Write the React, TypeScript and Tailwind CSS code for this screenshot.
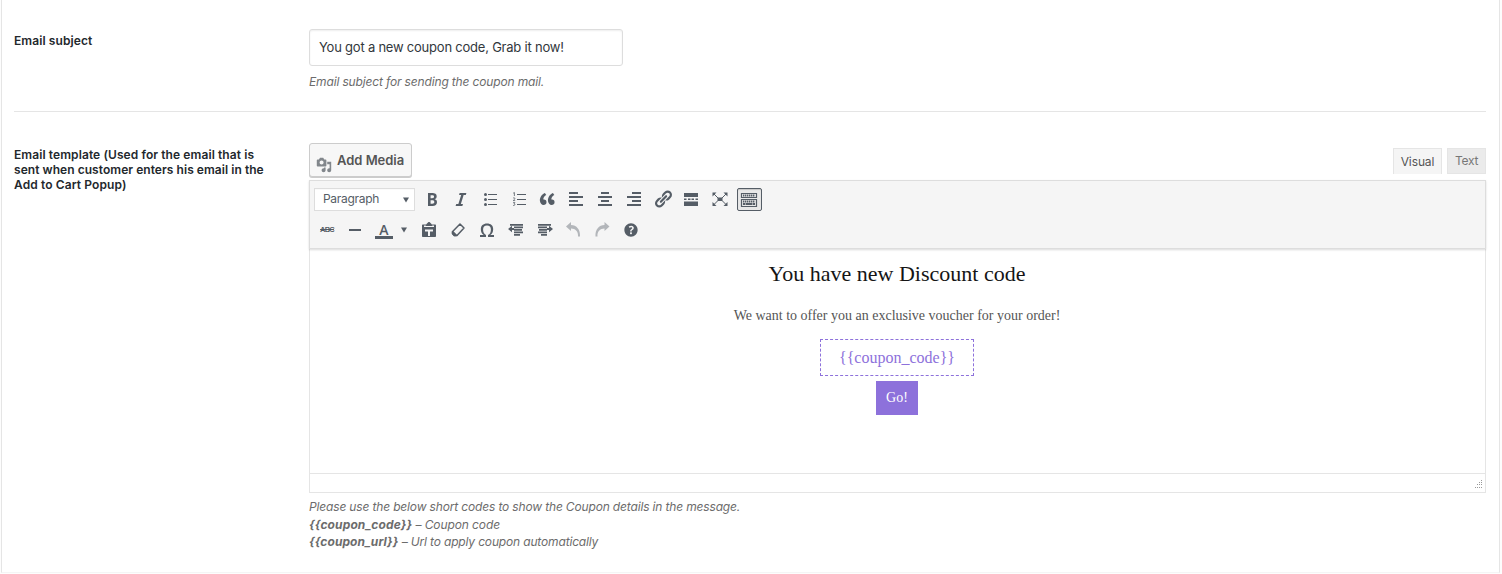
import React from "react";

const Icon = ({ children, faded = false }: { children: React.ReactNode; faded?: boolean }) => (
  <span className="flex h-[30px] w-[28.8px] shrink-0 items-center justify-center">
    <svg viewBox="0 0 20 20" className={faded ? "size-5 fill-[#b3b6ba]" : "size-5 fill-[#555d66]"}>
      {children}
    </svg>
  </span>
);

const Caret = () => (
  <svg viewBox="0 0 6 6" className="size-1.5 fill-[#555d66]">
    <path d="M0 0.5h6L3 5.5z" />
  </svg>
);

const Bars = ({ rows }: { rows: [number, number][] }) => (
  <Icon>
    {rows.map(([x, w], i) => (
      <rect key={i} x={x} y={3 + i * 4} width={w} height={2} />
    ))}
  </Icon>
);

const FirstRow = () => (
  <div className="flex h-[31px] items-start">
    <div className="mt-1 mr-[2.8px] flex h-[23px] w-[101px] items-center justify-between border border-[#ddd] bg-white pr-[5px] pl-2 text-[12px] text-[#555d66] shadow-[inset_0_1px_1px_-1px_rgba(0,0,0,.2)]">
      <span className="-mt-0.5 tracking-[-0.3px]">Paragraph</span>
      <Caret />
    </div>
    <Icon>
      <path d="M6 4v13h4.54c1.37 0 2.46-.33 3.26-1 .8-.66 1.2-1.58 1.2-2.77 0-.84-.17-1.51-.51-2.01s-.9-.85-1.67-1.03v-.09c.57-.1 1.02-.4 1.36-.9s.51-1.13.51-1.91c0-1.14-.39-1.98-1.17-2.5C12.75 4.26 11.5 4 9.78 4H6zm2.57 5.15V6.26h1.36c.73 0 1.27.11 1.61.32.34.22.51.58.51 1.07 0 .54-.16.92-.47 1.15s-.82.35-1.51.35h-1.5zm0 2.19h1.6c1.44 0 2.16.53 2.16 1.61 0 .6-.17 1.05-.51 1.34s-.86.43-1.57.43H8.57v-3.38z" />
    </Icon>
    <Icon>
      <path d="M14.78 6h-2.13l-2.8 9h2.12l-.62 2H4.6l.62-2h2.14l2.8-9H8.03l.62-2h6.75z" />
    </Icon>
    <Icon>
      <circle cx="5.5" cy="5.5" r="1.5" />
      <circle cx="5.5" cy="10.5" r="1.5" />
      <circle cx="5.5" cy="15.5" r="1.5" />
      <path d="M8 5h9v1H8zM8 10h9v1H8zM8 15h9v1H8z" />
    </Icon>
    <Icon>
      <path d="M8 5h9v1H8zM8 10h9v1H8zM8 15h9v1H8z" />
      <path
        d="M4.2 4.2 5.4 3.5V7M4 9.2c1-.8 2.3-.2 1.8.8L4.2 11.6h2M4.1 13.6h1.8L5 14.9c1.4 0 1.2 2-.9 1.5"
        fill="none"
        stroke="#555d66"
        strokeWidth=".8"
      />
    </Icon>
    <Icon>
      <path d="M9.49 13.22c0-.74-.2-1.38-.61-1.9-.62-.78-1.83-.88-2.53-.72-.29-1.65 1.11-3.75 2.92-4.65L7.88 4c-2.73 1.3-5.42 4.28-4.96 8.05C3.21 14.43 4.59 16 6.54 16c.85 0 1.56-.25 2.12-.75s.83-1.18.83-2.03zm8.05 0c0-.74-.2-1.38-.61-1.9-.63-.78-1.83-.88-2.53-.72-.29-1.65 1.11-3.75 2.92-4.65L15.93 4c-2.73 1.3-5.41 4.28-4.95 8.05.29 2.38 1.66 3.95 3.61 3.95.85 0 1.56-.25 2.12-.75s.83-1.18.83-2.03z" />
    </Icon>
    <Bars rows={[[3, 9], [3, 14], [3, 9], [3, 14]]} />
    <Bars rows={[[6, 8], [3, 14], [6, 8], [3, 14]]} />
    <Bars rows={[[8, 9], [3, 14], [8, 9], [3, 14]]} />
    <Icon>
      <path d="M17.74 2.76c1.68 1.69 1.68 4.41 0 6.1l-1.53 1.52c-1.12 1.12-2.7 1.47-4.14 1.09l2.62-2.61.76-.77.76-.76c.84-.84.84-2.2 0-3.04-.84-.85-2.2-.85-3.04 0l-.77.76-3.38 3.38c-.37-1.44-.02-3.02 1.1-4.14l1.52-1.53c1.69-1.68 4.42-1.68 6.1 0zM8.59 13.43l5.34-5.34c.42-.42.42-1.1 0-1.52-.44-.43-1.13-.39-1.53 0l-5.33 5.34c-.42.42-.42 1.1 0 1.52.44.43 1.13.39 1.52 0zm-.76 2.29l4.14-4.15c.38 1.44.03 3.02-1.09 4.14l-1.52 1.53c-1.69 1.68-4.41 1.68-6.1 0-1.68-1.68-1.68-4.42 0-6.1l1.53-1.52c1.12-1.12 2.7-1.47 4.14-1.1l-4.14 4.15c-.85.84-.85 2.2 0 3.05.84.84 2.2.84 3.04 0z" />
    </Icon>
    <Icon>
      <path d="M3 4h14v4H3zM3 9.5h2.5V11H3zM7 9.5h2.5V11H7zM10.5 9.5H13V11h-2.5zM14.5 9.5H17V11h-2.5zM3 12.5h14V17H3z" />
    </Icon>
    <Icon>
      <path d="M7.5 8.5h5V12h-5zM2.500 3.500H6.500l-4 4zM17.500 3.500v4l-4-4zM2.500 17v-4l4 4zM17.500 17h-4l4-4z" />
      <path d="m4 5 4 4M16 5l-4 4M4 15.500l4-4M16 15.500l-4-4" stroke="#555d66" strokeWidth="1" />
    </Icon>
    <span className="mt-1 ml-[2.2px] flex h-[23px] w-[25px] items-center justify-center rounded-[2px] border border-[#555d66] bg-[#e8e8e8] shadow-[inset_0_1px_1px_rgba(0,0,0,.15)]">
      <svg viewBox="0 0 20 20" className="size-5 shrink-0 fill-none stroke-[#555d66]">
        <path d="M2.5 3.5h15v4h-15zM2.5 9.5h15v7h-15z" strokeWidth="1.2" />
        <path d="M4 5.5h12" strokeWidth="2" strokeDasharray="1.4 .6" />
        <path d="M4 11.5h12" strokeWidth="2" strokeDasharray="1.4 .6" />
        <path d="M4 14h2.5M7 14h6M13.5 14H16" strokeWidth="2" />
      </svg>
    </span>
  </div>
);

const SecondRow = () => (
  <div className="flex h-[31px] items-start">
    <span className="flex h-[30px] w-[26px] items-center justify-center font-['Liberation_Sans'] text-[7.5px] font-bold tracking-[-0.8px] text-[#555d66] line-through">
      ABC
    </span>
    <span className="w-px" />
    <Icon>
      <path d="M4 9h12v2H4z" />
    </Icon>
    <span className="flex w-[28px] justify-center pt-2">
      <span className="flex h-4 w-[18px] items-end justify-center border-b-[3px] border-[#555d66] font-['Open_Sans'] text-[14px] leading-[13px] font-semibold text-[#555d66]">
        A
      </span>
    </span>
    <span className="flex h-[30px] w-[12px] items-center justify-center">
      <Caret />
    </span>
    <span className="w-[5.2px]" />
    <Icon>
      <path
        fillRule="evenodd"
        d="M4 4.500h12c.6 0 1 .4 1 1V16c0 .6-.4 1-1 1H4c-.6 0-1-.4-1-1V5.500c0-.6.4-1 1-1zM5 5.500V7h10V5.500zM14 9.500H6v2h3V16h2v-4.500h3z"
      />
      <path d="M6.500 6 8 3.500 9.500 2h1L12 3.500 13.500 6z" />
    </Icon>
    <Icon>
      <path d="m12 4 4 4-7 7.500H6.200l-1.800-1.900v-1.900z" fill="none" stroke="#555d66" strokeWidth="1.5" strokeLinejoin="round" />
      <path d="m4.200 12 1-1.100 4.200 4.300-1 1H6.200l-2-2z" />
    </Icon>
    <Icon>
      <path d="M10 5.4c1.27 0 2.24.36 2.91 1.08.66.71 1 1.76 1 3.13 0 1.28-.23 2.37-.69 3.27-.47.89-1.27 1.52-2.22 2.12v2h6v-2h-3.69c.92-.64 1.62-1.34 2.12-2.34.49-1.01.74-2.13.74-3.35 0-1.78-.55-3.19-1.65-4.22S11.92 3.54 10 3.54s-3.43.53-4.52 1.57c-1.1 1.04-1.65 2.44-1.65 4.2 0 1.21.24 2.31.73 3.33.48 1.01 1.19 1.71 2.1 2.36H3v2h6v-2c-.98-.64-1.8-1.28-2.24-2.17-.45-.89-.67-1.96-.67-3.22 0-1.37.33-2.41 1-3.13C7.75 5.76 8.72 5.4 10 5.4z" />
    </Icon>
    <Icon>
      <path d="M4 4h13v1.700H4zM8 6.500h9v1.700H8zM8 9h8v1.700H8zM8 11.500h9v1.700H8zM8 14h6v1.700H8zM2 9l4-3.200V8h2v2H6v2.200z" />
    </Icon>
    <Icon>
      <path d="M3 4h13v1.700H3zM3 6.500h9v1.700H3zM4 9h8v1.700H4zM3 11.500h9v1.700H3zM6 14h6v1.700H6zM18 9l-4-3.200V8h-2v2h2v2.200z" />
    </Icon>
    <Icon faded>
      <path d="M8 2v3c5.500 0 9.500 4.500 9 11.500h-2C15.500 11.500 12.500 8.500 8 8.500V11L3 6.500z" />
    </Icon>
    <Icon faded>
      <path d="M12.500 2v3C7 5 3 9.500 3.500 16.500h2C5 11.500 8 8.500 12.500 8.500V11l5-4.500z" />
    </Icon>
    <Icon>
      <path
        transform="translate(.5 .5) scale(.95)"
        d="M17 10c0-3.87-3.14-7-7-7-3.87 0-7 3.13-7 7s3.13 7 7 7c3.86 0 7-3.13 7-7zm-6.3 1.48H9.14v-.43c0-.38.08-.7.24-.98s.46-.57.88-.89c.41-.29.68-.53.81-.71.14-.18.2-.39.2-.62 0-.25-.09-.44-.28-.58-.19-.13-.45-.19-.79-.19-.58 0-1.25.19-2 .57l-.64-1.28c.87-.49 1.8-.74 2.77-.74.81 0 1.45.2 1.92.58.48.39.71.91.71 1.55 0 .43-.09.8-.29 1.11-.19.32-.57.67-1.11 1.06-.38.28-.61.49-.71.63-.1.15-.15.34-.15.57v.35zm-1.47 2.74c-.18-.17-.27-.42-.27-.73 0-.33.08-.58.26-.75s.43-.25.77-.25c.32 0 .57.09.75.26s.27.42.27.74c0 .3-.09.55-.27.72-.18.18-.43.27-.75.27-.33 0-.58-.09-.76-.26z"
      />
    </Icon>
  </div>
);

const MediaIcon = () => (
  <svg viewBox="0 0 20 20" className="mt-[10px] size-4 fill-[#82878c]">
    <path d="M13 11V4c0-.55-.45-1-1-1h-1.67L9 1H5L3.67 3H2c-.55 0-1 .45-1 1v7c0 .55.45 1 1 1h10c.55 0 1-.45 1-1zM7 4.5c1.38 0 2.5 1.12 2.5 2.5S8.38 9.5 7 9.5 4.5 8.38 4.5 7 5.62 4.5 7 4.5zM14 6h5v10.5c0 1.38-1.12 2.5-2.5 2.5S14 17.88 14 16.5s1.12-2.5 2.5-2.5c.17 0 .34.02.5.05V9h-3V6zm-4 8.05V13h2v3.5c0 1.38-1.12 2.5-2.5 2.5S7 17.88 7 16.5 8.12 14 9.5 14c.17 0 .34.02.5.05z" />
  </svg>
);

export default function App() {
  return (
    <div className="h-[574px] w-[1502px] overflow-hidden bg-[#fdfdfd] pl-px font-[Inter,sans-serif] text-[12px]">
      <div className="h-[573px] w-[1499px] border-x border-b border-x-[#e5e5e5] border-b-[#f5f5f5] bg-white pr-[13px] pl-3">
        <section className="flex h-28 border-b border-[#e5e5e5]">
          <div className="w-[295px] pt-[33px] leading-[15px] font-semibold text-[#23282d]">
            <span className="tracking-[0.09px]">Email subject</span>
          </div>
          <div className="pt-[29px]">
            <div className="flex h-[37px] w-[314px] items-center rounded-[3px] border border-[#ddd] px-[9px] text-[13px] text-[#32373c] shadow-[inset_0_1px_2px_rgba(0,0,0,.07)]">
              <span className="tracking-[-0.22px]">You got a new coupon code, Grab it now!</span>
            </div>
            <p className="mt-[7px] leading-[18px] text-[#6c6c6c] italic">
              <span className="tracking-[-0.15px]">Email subject for sending the coupon mail.</span>
            </p>
          </div>
        </section>

        <section className="flex">
          <div className="w-[295px] shrink-0 pt-[35px] leading-[15px] font-semibold whitespace-nowrap text-[#23282d]">
            <div className="tracking-[0.09px]">Email template (Used for the email that is</div>
            <div className="tracking-[0.05px]">sent when customer enters his email in the</div>
            <div className="tracking-[0.11px]">Add to Cart Popup)</div>
          </div>
          <div className="w-[1177px] shrink-0 pt-[31px]">
            <div className="flex h-[37px] items-start justify-between">
              <button className="flex h-[34px] w-[103px] items-center gap-[5px] rounded-[3px] border border-[#ccc] bg-[#f7f7f7] pl-1.5 text-[13px] font-semibold whitespace-nowrap text-[#555] shadow-[0_1px_0_#ccc]">
                <MediaIcon />
                <span className="mt-0.5 tracking-[-0.03px]">Add Media</span>
              </button>
              <div className="flex gap-[5px] pt-[5px]">
                <div className="flex h-[26px] w-[49px] items-center justify-center border border-b-0 border-[#e5e5e5] bg-[#f5f5f5] tracking-[-0.1px] text-[#555]">
                  Visual
                </div>
                <div className="flex h-[26px] w-[39px] items-center justify-center border border-[#e5e5e5] bg-[#ebebeb] tracking-[-0.3px] text-[#777]">
                  Text
                </div>
              </div>
            </div>

            <div className="flex h-[313px] flex-col border border-[#e5e5e5]">
              <div className="-mx-px -mt-px h-[69px] shrink-0 border border-[#ddd] bg-[#f5f5f5] px-1 pt-[3px] shadow-[0_1px_2px_rgba(0,0,0,.15)]">
                <FirstRow />
                <SecondRow />
              </div>
              <div className="flex grow flex-col items-center pr-px font-['Liberation_Serif',serif]">
                <h1 className="mt-[11px] text-[22px] leading-[28px] text-[#151515]">You have new Discount code</h1>
                <p className="mt-[19px] text-[14px] leading-[18px] text-[#555]">
                  We want to offer you an exclusive voucher for your order!
                </p>
                <div className="mt-[14px] flex h-[37px] w-[154px] items-center justify-center border border-dashed border-[#8d71db] text-[16px] text-[#8d71db]">
                  {"{{coupon_code}}"}
                </div>
                <div className="mt-[5px] flex h-[34px] w-[42px] items-center justify-center bg-[#8d71db] pb-px text-[14px] text-white">
                  Go!
                </div>
              </div>
              <div className="flex h-[19px] shrink-0 items-end justify-end border-t border-[#e5e5e5] pr-[3px] pb-1">
                <svg viewBox="0 0 8 8" className="size-2 fill-[#999]">
                  <path d="M7 0h1v1H7zM5 2h1v1H5zM7 2h1v1H7zM3 4h1v1H3zM5 4h1v1H5zM7 4h1v1H7zM1 7h1v1H1zM3 7h1v1H3zM5 7h1v1H5zM7 7h1v1H7z" />
                </svg>
              </div>
            </div>

            <div className="pt-[5px] leading-[17.5px] text-[#6c6c6c] italic">
              <p>
                <span className="tracking-[-0.155px]">
                  Please use the below short codes to show the Coupon details in the message.
                </span>
              </p>
              <p>
                <b className="font-bold tracking-[0.12px]">{"{{coupon_code}}"}</b>
                <span className="tracking-[-0.1px]"> – Coupon code</span>
              </p>
              <p>
                <b className="font-bold tracking-[0.07px]">{"{{coupon_url}}"}</b>
                <span className="tracking-[-0.16px]"> – Url to apply coupon automatically</span>
              </p>
            </div>
          </div>
        </section>
      </div>
    </div>
  );
}
